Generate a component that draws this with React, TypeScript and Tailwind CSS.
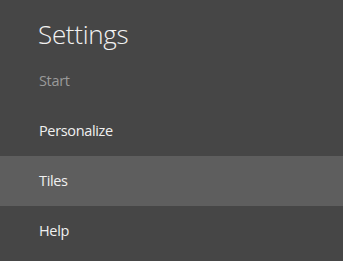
import React from 'react';

const items = [
  { label: 'Start', muted: true },
  { label: 'Personalize' },
  { label: 'Tiles', active: true },
  { label: 'Help' },
];

export default function App() {
  return (
    <div className="w-[343px] h-[261px] bg-[#464646] overflow-hidden font-['Open_Sans',sans-serif]">
      <div className="h-[56px] pl-[38px] pt-[19px] text-[26px] leading-[30px] font-light tracking-[-0.3px] text-[#f2f2f2]">
        Settings
      </div>
      {items.map((item) => (
        <div
          key={item.label}
          className={`h-[50px] pl-[39px] flex items-center text-[14.5px] tracking-[-0.35px] ${
            item.active ? 'bg-[#5e5e5e]' : ''
          } ${item.muted ? 'text-[#9a9a9a]' : 'text-[#f0f0f0]'}`}
        >
          {item.label}
        </div>
      ))}
    </div>
  );
}
